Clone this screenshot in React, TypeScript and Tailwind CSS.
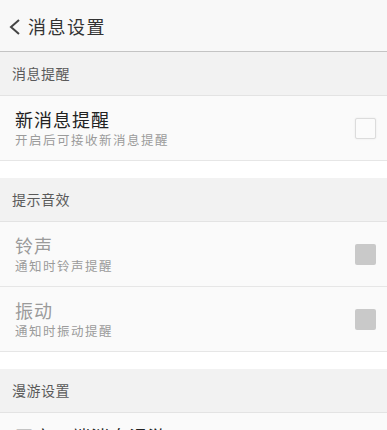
import React from "react";

const font = { fontFamily: '"Noto Sans CJK SC", "Noto Sans", sans-serif' };

function SectionHeader({ title }: { title: string }) {
  return (
    <div className="h-[44px] bg-[#f2f2f2] border-b border-[#e3e3e3] flex items-center px-3 text-[14px] tracking-[0.5px] text-[#5a5a5a]">
      {title}
    </div>
  );
}

function Row({
  title,
  sub,
  disabled,
}: {
  title: string;
  sub: string;
  disabled?: boolean;
}) {
  return (
    <div className="h-[65px] bg-[#fafafa] border-b border-[#e6e6e6] flex items-center justify-between pl-[15px] pr-[11px]">
      <div className="flex flex-col">
        <span
          className={`text-[18px] leading-[22px] tracking-[1px] ${disabled ? "text-[#9a9a9a]" : "text-[#222222]"}`}
        >
          {title}
        </span>
        <span className="text-[12.5px] leading-[16px] tracking-[1.5px] text-[#9b9b9b] mt-[2px]">{sub}</span>
      </div>
      {disabled ? (
        <div className="w-[21px] h-[21px] rounded-[2px] bg-[#c9c9c9]" />
      ) : (
        <div className="w-[21px] h-[21px] rounded-[2px] border border-[#dcdcdc] bg-[#fbfbfb] shadow-[0_0_2px_rgba(0,0,0,0.08)]" />
      )}
    </div>
  );
}

export default function App() {
  return (
    <div className="w-[387px] h-[430px] overflow-hidden bg-white" style={font}>
      <div className="h-[52px] bg-[#f8f8f8] border-b border-[#c4c4c4] flex items-center pl-[7px]">
        <svg width="16" height="18" viewBox="0 0 16 18" className="mr-[5px] mt-[2px]">
          <path d="M12 2 L4 9 L12 16" fill="none" stroke="#444" strokeWidth="2" />
        </svg>
        <span className="text-[18px] tracking-[1.5px] text-[#333333] mt-[2px]">消息设置</span>
      </div>
      <SectionHeader title="消息提醒" />
      <Row title="新消息提醒" sub="开启后可接收新消息提醒" />
      <div className="h-[17px] bg-white" />
      <SectionHeader title="提示音效" />
      <Row title="铃声" sub="通知时铃声提醒" disabled />
      <Row title="振动" sub="通知时振动提醒" disabled />
      <div className="h-[17px] bg-white" />
      <SectionHeader title="漫游设置" />
      <Row title="开启云端消息漫游" sub="开启后可同步云端消息" />
    </div>
  );
}
